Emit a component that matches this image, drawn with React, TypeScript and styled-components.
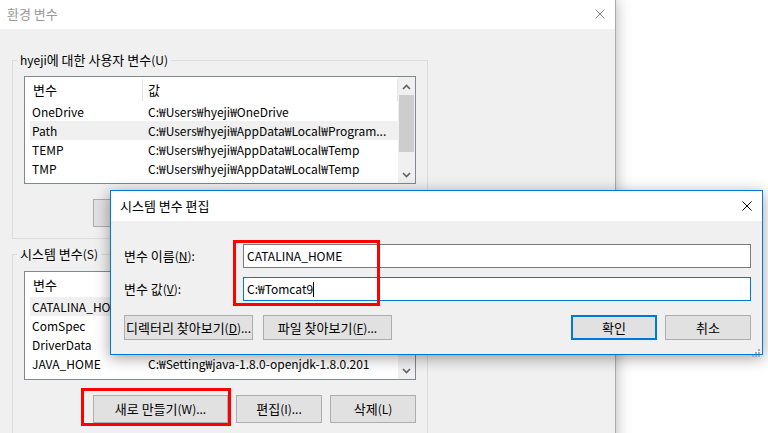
import React from 'react';
import styled, { createGlobalStyle } from 'styled-components';

const GlobalStyle = createGlobalStyle`
  html, body {
    margin: 0;
    padding: 0;
    width: 768px;
    height: 433px;
    overflow: hidden;
    background: #ffffff;
  }
  body {
    font-family: "Noto Sans CJK KR", "Noto Sans", sans-serif;
    font-size: 12px;
    line-height: 16px;
    color: #000;
  }
  * { box-sizing: border-box; }
`;

/* Hangul runs render a touch larger than Latin runs in the Windows UI font */
const Ko = styled.span`
  font-size: 13px;
`;

const Desktop = styled.div`
  position: relative;
  width: 768px;
  height: 433px;
  overflow: hidden;
  background: #ffffff;
`;

const Window = styled.div<{ $left: number; $top: number; $width: number; $height: number; $active?: boolean }>`
  position: absolute;
  left: ${p => p.$left}px;
  top: ${p => p.$top}px;
  width: ${p => p.$width}px;
  height: ${p => p.$height}px;
  display: flex;
  flex-direction: column;
  background: #f0f0f0;
  border: 1px solid ${p => (p.$active ? '#0078d7' : '#aaaaaa')};
  box-shadow: ${p => (p.$active ? '0 3px 14px rgba(0,0,0,0.38)' : '0 0 14px rgba(0,0,0,0.30)')};
`;

const TitleBar = styled.div<{ $height: number; $padLeft: number; $lift: number; $inactive?: boolean }>`
  height: ${p => p.$height}px;
  flex: none;
  background: #ffffff;
  display: flex;
  align-items: center;
  justify-content: space-between;
  padding: 0 10px ${p => p.$lift}px ${p => p.$padLeft}px;
  color: ${p => (p.$inactive ? '#999999' : '#000000')};
`;

const CloseIcon = ({ color }: { color: string }) => (
  <svg width="10" height="10" viewBox="0 0 10 10">
    <path d="M0.5 0.5 L9.5 9.5 M9.5 0.5 L0.5 9.5" stroke={color} strokeWidth="1" fill="none" />
  </svg>
);

const WindowBody = styled.div`
  flex: 1;
  padding: 23px 12px 0 12px;
  display: flex;
  flex-direction: column;
  gap: 7px;
`;

const GroupBox = styled.fieldset`
  margin: 0;
  padding: 0;
  min-width: 0;
  width: 416px;
  border: 1px solid #dcdcdc;
`;

const GroupLegend = styled.legend`
  margin-left: 4px;
  padding: 0 3px;
  line-height: 16px;
`;

const GroupContent = styled.div<{ $padTop: number }>`
  padding: ${p => p.$padTop}px 11px 11px 11px;
  display: flex;
  flex-direction: column;
  gap: 15px;
`;

const ListView = styled.div<{ $height: number }>`
  height: ${p => p.$height}px;
  border: 1px solid #828790;
  background: #ffffff;
  display: flex;
`;

const ListMain = styled.div`
  flex: 1;
  min-width: 0;
  display: flex;
  flex-direction: column;
`;

const ListHeader = styled.div`
  height: 25px;
  flex: none;
  display: grid;
  grid-template-columns: 118px 1fr;
`;

const HeaderCell = styled.div<{ $pad: number }>`
  display: flex;
  align-items: center;
  padding-left: ${p => p.$pad}px;
  border-right: 1px solid #e5e5e5;
  margin: 2px 0 1px 0;
`;

const Row = styled.div<{ $selected?: boolean }>`
  height: 19px;
  flex: none;
  margin-left: 5px;
  display: grid;
  grid-template-columns: 112px 1fr;
  align-items: center;
  background: ${p => (p.$selected ? '#f0f0f0' : 'transparent')};
  white-space: nowrap;
`;

const Cell = styled.div<{ $pad: number }>`
  padding-left: ${p => p.$pad}px;
  overflow: hidden;
`;

const ScrollBar = styled.div`
  width: 17px;
  flex: none;
  background: #f0f0f0;
  display: flex;
  flex-direction: column;
  align-items: center;
`;

const ScrollArrow = styled.div<{ $offset: number }>`
  height: 17px;
  width: 17px;
  flex: none;
  display: flex;
  align-items: center;
  justify-content: center;
  padding-top: ${p => p.$offset}px;
`;

const ScrollTrack = styled.div`
  flex: 1;
  width: 100%;
  display: flex;
  flex-direction: column;
  align-items: center;
`;

const ScrollThumb = styled.div<{ $top: number; $height: number }>`
  margin-top: ${p => p.$top}px;
  height: ${p => p.$height}px;
  width: 15px;
  background: #cdcdcd;
`;

const Chevron = ({ up }: { up?: boolean }) => (
  <svg width="9" height="6" viewBox="0 0 9 6">
    <path
      d={up ? 'M1 5 L4.5 1.5 L8 5' : 'M1 1 L4.5 4.5 L8 1'}
      stroke="#606060"
      strokeWidth="1.6"
      fill="none"
    />
  </svg>
);

const ButtonRow = styled.div<{ $justify: string }>`
  display: flex;
  justify-content: ${p => p.$justify};
  gap: 8px;
`;

const ButtonGroup = styled.div<{ $gap: number }>`
  display: flex;
  gap: ${p => p.$gap}px;
`;

const Button = styled.button<{ $width: number; $height: number; $default?: boolean }>`
  width: ${p => p.$width}px;
  height: ${p => p.$height}px;
  margin: 0;
  padding: 0;
  font-family: inherit;
  font-size: inherit;
  line-height: 16px;
  color: #000;
  background: #e1e1e1;
  border: ${p => (p.$default ? '2px solid #0078d7' : '1px solid #adadad')};
  white-space: nowrap;
  display: flex;
  align-items: center;
  justify-content: center;
`;

const DialogBody = styled.div`
  flex: 1;
  padding: 23px 11px 13px 13px;
  display: flex;
  flex-direction: column;
  gap: 14px;
`;

const FieldGrid = styled.div`
  display: grid;
  grid-template-columns: 119px 1fr;
  row-gap: 9px;
  align-items: center;
`;

const FieldLabel = styled.label``;

const TextBox = styled.div<{ $focused?: boolean }>`
  height: 24px;
  border: 1px solid ${p => (p.$focused ? '#0078d7' : '#7a7a7a')};
  background: #ffffff;
  padding-left: 3px;
  display: flex;
  align-items: center;
  white-space: nowrap;
`;

const Caret = styled.span`
  display: inline-block;
  width: 1px;
  height: 15px;
  background: #000;
`;

const Grip = styled.div`
  position: absolute;
  right: 2px;
  bottom: 2px;
  width: 8px;
  height: 8px;
`;

const Annotation = styled.div<{ $left: number; $top: number; $width: number; $height: number }>`
  position: absolute;
  left: ${p => p.$left}px;
  top: ${p => p.$top}px;
  width: ${p => p.$width}px;
  height: ${p => p.$height}px;
  border: 3px solid #ff0000;
  pointer-events: none;
`;

type Item = { name: string; value: string };

const userVars: Item[] = [
  { name: 'OneDrive', value: 'C:₩Users₩hyeji₩OneDrive' },
  { name: 'Path', value: 'C:₩Users₩hyeji₩AppData₩Local₩Program...' },
  { name: 'TEMP', value: 'C:₩Users₩hyeji₩AppData₩Local₩Temp' },
  { name: 'TMP', value: 'C:₩Users₩hyeji₩AppData₩Local₩Temp' },
];

const systemVars: Item[] = [
  { name: 'CATALINA_HOME', value: 'C:₩Tomcat9' },
  { name: 'ComSpec', value: 'C:₩WINDOWS₩system32₩cmd.exe' },
  { name: 'DriverData', value: 'C:₩Windows₩System32₩Drivers₩DriverData' },
  { name: 'JAVA_HOME', value: 'C:₩Setting₩java-1.8.0-openjdk-1.8.0.201' },
];

const VarList = ({
  items,
  selected,
  height,
  thumbTop,
  thumbHeight,
}: {
  items: Item[];
  selected: number;
  height: number;
  thumbTop: number;
  thumbHeight: number;
}) => (
  <ListView $height={height}>
    <ListMain>
      <ListHeader>
        <HeaderCell $pad={8}>
          <Ko>변수</Ko>
        </HeaderCell>
        <HeaderCell $pad={5}>
          <Ko>값</Ko>
        </HeaderCell>
      </ListHeader>
      {items.map((it, i) => (
        <Row key={it.name} $selected={i === selected}>
          <Cell $pad={2}>{it.name}</Cell>
          <Cell $pad={6}>{it.value}</Cell>
        </Row>
      ))}
    </ListMain>
    <ScrollBar>
      <ScrollArrow $offset={3}>
        <Chevron up />
      </ScrollArrow>
      <ScrollTrack>
        <ScrollThumb $top={thumbTop} $height={thumbHeight} />
      </ScrollTrack>
      <ScrollArrow $offset={0}>
        <Chevron />
      </ScrollArrow>
    </ScrollBar>
  </ListView>
);

const VarButtons = ({ mnemonic }: { mnemonic: string }) => (
  <ButtonRow $justify="flex-end">
    <Button $width={135} $height={28}>
      <Ko>새로 만들기</Ko>({mnemonic})...
    </Button>
    <Button $width={86} $height={28}>
      <Ko>편집</Ko>(I)...
    </Button>
    <Button $width={86} $height={28}>
      <Ko>삭제</Ko>(L)
    </Button>
  </ButtonRow>
);

export default function App() {
  return (
    <>
      <GlobalStyle />
      <Desktop>
        <Window $left={-1} $top={-1} $width={617} $height={520}>
          <TitleBar $height={29} $padLeft={7} $lift={2} $inactive>
            <Ko>환경 변수</Ko>
            <CloseIcon color="#8a8a8a" />
          </TitleBar>
          <WindowBody>
            <GroupBox>
              <GroupLegend>
                hyeji<Ko>에 대한 사용자 변수</Ko>(U)
              </GroupLegend>
              <GroupContent $padTop={8}>
                <VarList items={userVars} selected={1} height={108} thumbTop={1} thumbHeight={57} />
                <VarButtons mnemonic="N" />
              </GroupContent>
            </GroupBox>
            <GroupBox>
              <GroupLegend>
                <Ko>시스템 변수</Ko>(S)
              </GroupLegend>
              <GroupContent $padTop={9}>
                <VarList items={systemVars} selected={0} height={109} thumbTop={1} thumbHeight={40} />
                <VarButtons mnemonic="W" />
              </GroupContent>
            </GroupBox>
          </WindowBody>
        </Window>

        <Window $left={110} $top={190} $width={653} $height={165} $active>
          <TitleBar $height={30} $padLeft={9} $lift={0}>
            <Ko>시스템 변수 편집</Ko>
            <CloseIcon color="#000000" />
          </TitleBar>
          <DialogBody>
            <FieldGrid>
              <FieldLabel>
                <Ko>변수 이름</Ko>(<u>N</u>):
              </FieldLabel>
              <TextBox>CATALINA_HOME</TextBox>
              <FieldLabel>
                <Ko>변수 값</Ko>(<u>V</u>):
              </FieldLabel>
              <TextBox $focused>
                C:₩Tomcat9
                <Caret />
              </TextBox>
            </FieldGrid>
            <ButtonRow $justify="space-between">
              <ButtonGroup $gap={10}>
                <Button $width={129} $height={25}>
                  <Ko>디렉터리 찾아보기</Ko>(<u>D</u>)...
                </Button>
                <Button $width={129} $height={25}>
                  <Ko>파일 찾아보기</Ko>(<u>F</u>)...
                </Button>
              </ButtonGroup>
              <ButtonGroup $gap={8}>
                <Button $width={86} $height={25} $default>
                  <Ko>확인</Ko>
                </Button>
                <Button $width={86} $height={25}>
                  <Ko>취소</Ko>
                </Button>
              </ButtonGroup>
            </ButtonRow>
          </DialogBody>
          <Grip>
            <svg width="8" height="8" viewBox="0 0 8 8">
              <g fill="#a8a8a8">
                <rect x="6" y="0" width="2" height="2" />
                <rect x="3" y="3" width="2" height="2" />
                <rect x="6" y="3" width="2" height="2" />
                <rect x="0" y="6" width="2" height="2" />
                <rect x="3" y="6" width="2" height="2" />
                <rect x="6" y="6" width="2" height="2" />
              </g>
            </svg>
          </Grip>
        </Window>

        <Annotation $left={233} $top={240} $width={147} $height={66} />
        <Annotation $left={81} $top={388} $width={150} $height={38} />
      </Desktop>
    </>
  );
}
